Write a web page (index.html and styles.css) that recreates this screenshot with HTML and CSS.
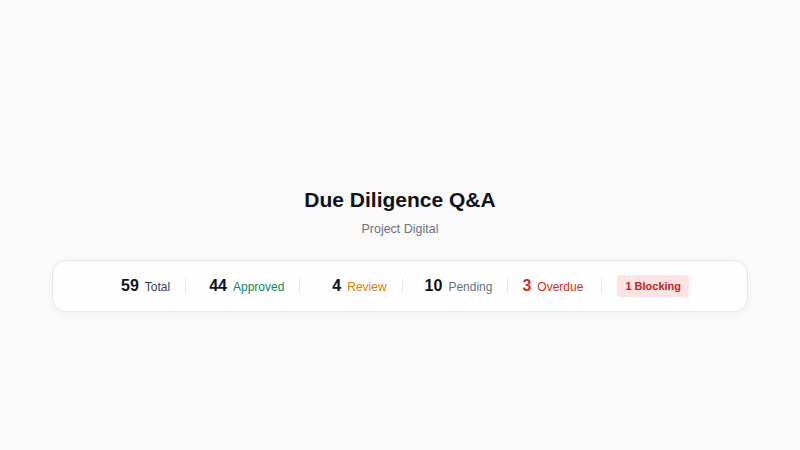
FILE: index.html
```html
<!DOCTYPE html>
<html lang="en">
<head>
<meta charset="utf-8">
<title>Due Diligence Q&amp;A</title>
<link rel="stylesheet" href="styles.css">
</head>
<body>
<main class="page">
  <header class="head">
    <h1 class="title">Due Diligence Q&amp;A</h1>
    <p class="subtitle">Project Digital</p>
  </header>
  <section class="card">
    <div class="stats">
      <div class="stat stat-total"><span class="num">59</span><span class="label">Total</span></div>
      <span class="divider"></span>
      <div class="stat stat-approved"><span class="num">44</span><span class="label">Approved</span></div>
      <span class="divider"></span>
      <div class="stat stat-review"><span class="num">4</span><span class="label">Review</span></div>
      <span class="divider"></span>
      <div class="stat stat-pending"><span class="num">10</span><span class="label">Pending</span></div>
      <span class="divider"></span>
      <div class="stat stat-overdue"><span class="num">3</span><span class="label">Overdue</span></div>
      <span class="divider"></span>
      <span class="badge">1 Blocking</span>
    </div>
  </section>
</main>
</body>
</html>
```

FILE: styles.css
```css
html, body {
  margin: 0;
  padding: 0;
  background: #fafafa;
  font-family: "Liberation Sans", Arial, Helvetica, sans-serif;
  color: #111827;
}

.page {
  width: 800px;
  height: 450px;
  box-sizing: border-box;
  padding: 187px 52px 0;
  display: flex;
  flex-direction: column;
  align-items: center;
}

.head {
  text-align: center;
}

.title {
  margin: 0;
  font-size: 21px;
  line-height: 25px;
  font-weight: 700;
  color: #111318;
}

.subtitle {
  margin: 9px 0 0;
  font-size: 12.5px;
  line-height: 16px;
  color: #6b7280;
}

.card {
  margin-top: 23px;
  width: 696px;
  height: 52px;
  box-sizing: border-box;
  background: #fefefe;
  border: 1px solid #e6e7ea;
  border-radius: 14px;
  box-shadow: 0 3px 10px rgba(0, 0, 0, 0.045);
  display: flex;
  align-items: center;
  justify-content: center;
}

.stats {
  display: flex;
  align-items: center;
  gap: 15px;
  margin-left: 10px;
}

.stat {
  display: flex;
  align-items: baseline;
  gap: 6px;
  white-space: nowrap;
}

.num {
  font-size: 16px;
  font-weight: 700;
  color: #111318;
}

.label {
  font-size: 12px;
  color: #374151;
}

.stat-approved { padding-left: 8px; }
.stat-approved .label { color: #0a8a5f; }

.stat-review { padding-left: 17px; }
.stat-review .label { color: #d97f0a; }

.stat-pending { padding-left: 7px; }
.stat-pending .label { color: #6b7280; }

.stat-overdue { margin-left: -1px; padding-right: 3px; }
.stat-overdue .num,
.stat-overdue .label { color: #d42c1f; }

.divider {
  width: 1px;
  height: 16px;
  background: #e8e9ec;
}

.badge {
  display: inline-block;
  height: 22px;
  line-height: 22px;
  padding: 0 8px;
  border-radius: 4px;
  background: #fde3e3;
  color: #c0261d;
  font-size: 11px;
  font-weight: 700;
  white-space: nowrap;
}
```
